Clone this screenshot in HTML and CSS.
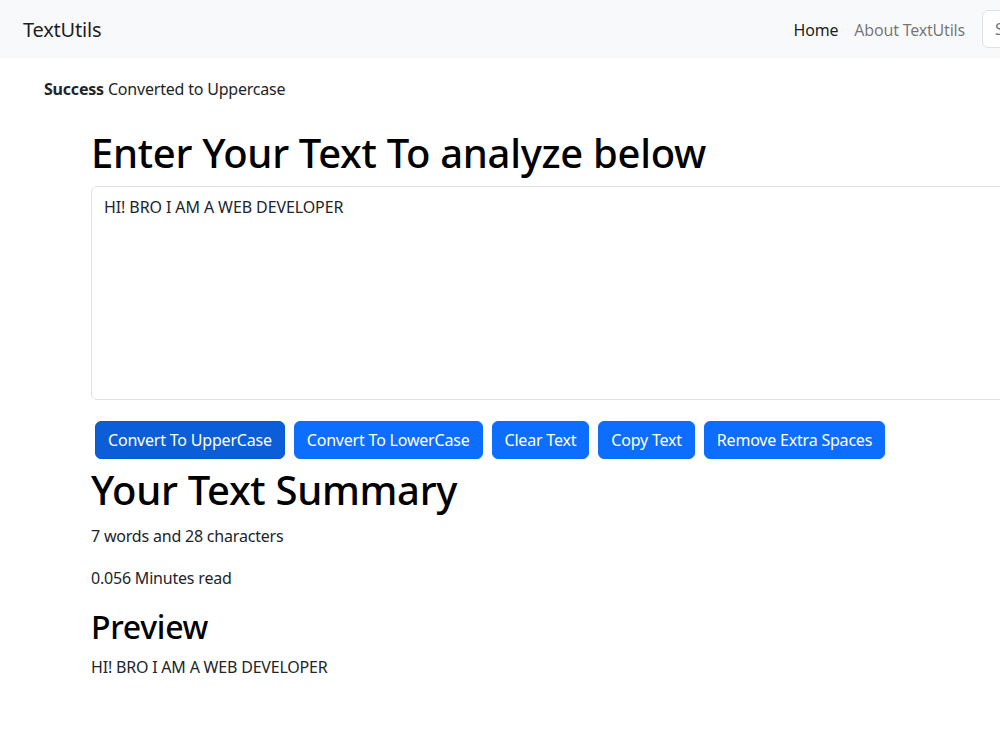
FILE: index.html
```html
<!DOCTYPE html>
<html lang="en">
<head>
<meta charset="utf-8">
<title>TextUtils</title>
<link rel="stylesheet" href="styles.css">
</head>
<body>
<nav class="navbar">
  <a class="brand" href="#">TextUtils</a>
  <ul class="nav-links">
    <li><a class="nav-link active" href="#">Home</a></li>
    <li><a class="nav-link" href="#">About TextUtils</a></li>
  </ul>
  <form class="search">
    <input class="search-input" type="search" placeholder="Search">
  </form>
</nav>
<div class="alert"><strong>Success</strong> Converted to Uppercase</div>
<main class="container">
  <h1 class="title">Enter Your Text To analyze below</h1>
  <textarea class="text-box">HI! BRO I AM A WEB DEVELOPER</textarea>
  <div class="buttons">
    <button class="btn btn-focus">Convert To UpperCase</button>
    <button class="btn">Convert To LowerCase</button>
    <button class="btn">Clear Text</button>
    <button class="btn">Copy Text</button>
    <button class="btn">Remove Extra Spaces</button>
  </div>
  <h1 class="summary-title">Your Text Summary</h1>
  <p class="stat">7 words and 28 characters</p>
  <p class="stat stat-gap">0.056 Minutes read</p>
  <h2 class="preview-title">Preview</h2>
  <p class="preview">HI! BRO I AM A WEB DEVELOPER</p>
</main>
</body>
</html>
```

FILE: styles.css
```css
html, body {
  margin: 0;
  padding: 0;
  overflow: hidden;
}
body {
  width: 1000px;
  height: 750px;
  background: #fff;
  color: #212529;
  font-family: "Noto Sans", "Open Sans", sans-serif;
  font-size: 16px;
  line-height: 24px;
  letter-spacing: -0.2px;
}
.navbar {
  box-sizing: border-box;
  width: 1250px;
  height: 58px;
  background: #f8f9fa;
  display: flex;
  align-items: center;
  padding: 0 12px 0 23px;
}
.brand {
  font-size: 20px;
  line-height: 30px;
  color: rgba(0,0,0,0.9);
  text-decoration: none;
  margin-top: 2px;
}
.nav-links {
  list-style: none;
  margin: 2px 9px 0 auto;
  padding: 0;
  display: flex;
}
.nav-link {
  display: block;
  padding: 8px 8px;
  color: rgba(0,0,0,0.55);
  text-decoration: none;
}
.nav-link.active {
  color: rgba(0,0,0,0.9);
}
.search {
  margin: 0;
}
.search-input {
  box-sizing: border-box;
  width: 256px;
  height: 38px;
  border: 1px solid #dee2e6;
  border-radius: 6px;
  background: #fff;
  padding: 6px 12px;
  font-family: inherit;
  font-size: 16px;
  color: #212529;
}
.search-input::placeholder {
  color: #6c757d;
}
.alert {
  padding: 19px 0 0 44px;
  height: 24px;
}
.container {
  padding-left: 91px;
}
.title, .summary-title {
  font-size: 40px;
  line-height: 48px;
  font-weight: 500;
  letter-spacing: -0.3px;
  color: #000;
  margin: 28px 0 9px;
  white-space: nowrap;
}
.text-box {
  display: block;
  box-sizing: border-box;
  width: 1300px;
  height: 214px;
  margin: 0;
  border: 1px solid #dee2e6;
  border-radius: 6px;
  padding: 8px 12px 6px;
  font-family: inherit;
  font-size: 16px;
  line-height: 24px;
  letter-spacing: -0.1px;
  color: #212529;
  resize: none;
  outline: none;
}
.buttons {
  display: flex;
  gap: 9px;
  margin: 21px 0 0 4px;
}
.btn {
  height: 38px;
  padding: 0 12px;
  border: 1px solid #0d6efd;
  border-radius: 6px;
  background: #0d6efd;
  color: #fff;
  font-family: inherit;
  font-size: 16px;
  line-height: 24px;
  letter-spacing: -0.2px;
  white-space: nowrap;
  cursor: pointer;
}
.btn-focus {
  background: #0b5ed7;
  border-color: #0a58ca;
}
.summary-title {
  margin: 7px 0 0;
}
.stat {
  margin: 10px 0 0;
}
.stat-gap {
  margin-top: 18px;
}
.preview-title {
  font-size: 32px;
  line-height: 38px;
  font-weight: 500;
  letter-spacing: -0.3px;
  color: #000;
  margin: 18px 0 0;
}
.preview {
  margin: 9px 0 0;
}
```
